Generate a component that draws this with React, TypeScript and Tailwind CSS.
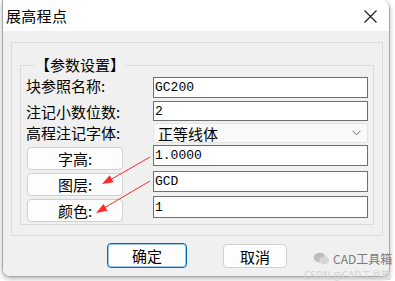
import React from "react";

const cjk = { fontFamily: '"Noto Sans CJK SC", "Noto Sans", sans-serif' };
const mono = { fontFamily: '"Liberation Mono", "DejaVu Sans Mono", monospace' };

function TextBox({ value, h = "h-[21px]" }: { value: string; h?: string }) {
  return (
    <div
      className={`w-[215px] ${h} bg-white border border-[#707070] flex items-center pl-[1px] text-[13px] text-black leading-none`}
      style={mono}
    >
      {value}
    </div>
  );
}

function SideButton({ label }: { label: string }) {
  return (
    <div className="ml-[1px] w-[96px] h-[23px] mt-[2px] bg-[#fdfdfd] border border-[#d0d0d0] rounded-[4px] flex items-center justify-center text-[15px] leading-none text-black">
      {label}
    </div>
  );
}

export default function App() {
  return (
    <div className="relative w-[395px] h-[281px] bg-white overflow-hidden" style={cjk}>
      <div className="ml-[2px] w-[388px] h-[277px] border border-t-0 border-[#a8a8a8] rounded-tr-[8px] rounded-b-[8px] overflow-hidden flex flex-col shadow-[0_2px_5px_rgba(0,0,0,0.28)]">
        {/* title bar */}
        <div className="h-[31px] bg-white flex items-center justify-between pl-[3px] pr-[12px]">
          <span className="text-[15px] leading-none text-black tracking-[0.3px]">展高程点</span>
          <svg width="13" height="13" viewBox="0 0 13 13" className="mt-[1px]">
            <path d="M0.5 0.5 L12.5 12.5 M12.5 0.5 L0.5 12.5" stroke="#1a1a1a" strokeWidth="1.1" fill="none" />
          </svg>
        </div>
        {/* body */}
        <div className="flex-1 bg-[#f0f0f0] pl-[8px] pt-[11px]">
          <div className="w-[372px] h-[194px] border border-[#dadada] pl-[8px] pt-[12px]">
            <fieldset className="w-[354px] h-[170px] border border-[#dadada] pl-[5px]">
              <legend className="ml-[9px] text-[15px] leading-[20px] text-black">【参数设置】</legend>
              <div className="flex flex-col">
                <div className="flex items-start mt-[2px] h-[21px]">
                  <div className="w-[127px] text-[15px] leading-[18px] text-black">块参照名称:</div>
                  <TextBox value="GC200" />
                </div>
                <div className="flex items-center mt-[3px] h-[20px]">
                  <div className="w-[127px] text-[15px] leading-[18px] text-black mt-[2px]">注记小数位数:</div>
                  <TextBox value="2" h="h-[20px]" />
                </div>
                <div className="flex items-center mt-[2px] h-[20px]">
                  <div className="w-[127px] text-[15px] leading-[18px] text-black">高程注记字体:</div>
                  <div className="w-[215px] h-[20px] bg-[#f9f9f9] border border-[#e3e3e3] rounded-[3px] flex items-center justify-between pl-[4px] pr-[6px]">
                    <span className="text-[15px] leading-none text-black">正等线体</span>
                    <svg width="9" height="6" viewBox="0 0 9 6">
                      <path d="M0.5 0.8 L4.5 4.8 L8.5 0.8" stroke="#6a6a6a" strokeWidth="1" fill="none" />
                    </svg>
                  </div>
                </div>
                <div className="flex items-start mt-[2px] h-[26px]">
                  <div className="w-[127px]">
                    <SideButton label="字高:" />
                  </div>
                  <TextBox value="1.0000" />
                </div>
                <div className="flex items-start h-[26px]">
                  <div className="w-[127px]">
                    <SideButton label="图层:" />
                  </div>
                  <TextBox value="GCD" />
                </div>
                <div className="flex items-start h-[26px]">
                  <div className="w-[127px]">
                    <SideButton label="颜色:" />
                  </div>
                  <div className="-mt-[1px]">
                    <TextBox value="1" h="h-[22px]" />
                  </div>
                </div>
              </div>
            </fieldset>
          </div>
          <div className="flex items-center mt-[7px] pl-[96px]">
            <div className="w-[80px] h-[25px] bg-[#fdfdfd] border border-[#0067c0] rounded-[4px] shadow-[inset_0_0_0_1px_rgba(0,103,192,0.35)] flex items-center justify-center text-[15px] leading-none text-black">
              确定
            </div>
            <div className="ml-[36px] w-[64px] h-[24px] mt-[1px] bg-[#fdfdfd] border border-[#d0d0d0] rounded-[4px] flex items-center justify-center text-[15px] leading-none text-black">
              取消
            </div>
          </div>
        </div>
      </div>

      {/* red arrows */}
      <svg className="absolute left-0 top-0 pointer-events-none" width="395" height="281" viewBox="0 0 395 281">
        <line x1="150" y1="157" x2="110" y2="180" stroke="#ff2a2a" strokeWidth="1" />
        <polygon points="102,184 113.5,182.2 109.7,175.2" fill="#ff2a2a" />
        <line x1="150" y1="181" x2="104" y2="208" stroke="#ff2a2a" strokeWidth="1" />
        <polygon points="96,213 107.5,210.8 103.5,204" fill="#ff2a2a" />
      </svg>

      {/* watermark */}
      <div className="absolute left-[313px] top-[252px] flex items-center gap-[3px] pointer-events-none">
        <svg width="17" height="13" viewBox="0 0 18 14">
          <ellipse cx="7" cy="6" rx="6.5" ry="5.2" fill="#bdbdbd" />
          <ellipse cx="12" cy="9" rx="5.2" ry="4.2" fill="#d6d6d6" />
        </svg>
        <span className="text-[12px] leading-[12px] text-[#7a7a7a]">CAD工具箱</span>
      </div>
      <div className="absolute left-[304px] top-[270px] text-[10px] leading-[10px] text-[#d2d2d2] pointer-events-none">
        CSDN @CAD工具箱
      </div>
    </div>
  );
}
